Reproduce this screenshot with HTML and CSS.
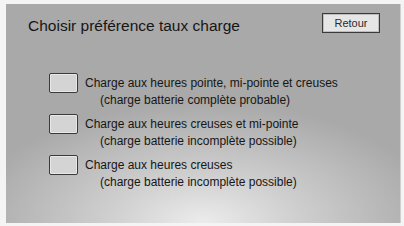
FILE: index.html
```
<!DOCTYPE html>
<html lang="fr">
<head>
    <meta charset="UTF-8">
    <meta name="viewport" content="width=device-width, initial-scale=1.0">
    <title>Choisir préférence taux charge</title>
    <link rel="stylesheet" href="styles.css">
</head>
<body>
    <div class="screen">
        <div class="header">
            <div class="title">Choisir préférence taux charge</div>
            <button class="back-btn">Retour</button>
        </div>
        <div class="options">
            <div class="option">
                <span class="check"></span>
                <div class="label">
                    <div>Charge aux heures pointe, mi-pointe et creuses</div>
                    <div class="note">(charge batterie complète probable)</div>
                </div>
            </div>
            <div class="option">
                <span class="check"></span>
                <div class="label">
                    <div>Charge aux heures creuses et mi-pointe</div>
                    <div class="note">(charge batterie incomplète possible)</div>
                </div>
            </div>
            <div class="option">
                <span class="check"></span>
                <div class="label">
                    <div>Charge aux heures creuses</div>
                    <div class="note">(charge batterie incomplète possible)</div>
                </div>
            </div>
        </div>
    </div>
</body>
</html>
```

FILE: styles.css
```
body {
    margin: 0;
    padding: 4px 3px 3px 6px;
    background-color: #f4f4f4;
    font-family: "Liberation Sans", Arial, sans-serif;
    color: #161616;
}
.screen {
    height: 219px;
    box-sizing: border-box;
    padding: 9px 20px 0 22px;
    background: radial-gradient(ellipse 60% 55% at 50% 100%, #ececec 0%, #cfcfcf 40%, #a9a9a9 100%), #a4a4a4;
    border-right: 1px solid #cfcfcf;
}
.header {
    display: flex;
    justify-content: space-between;
    align-items: flex-start;
}
.title {
    font-size: 15.5px;
    margin-top: 4px;
}
.back-btn {
    width: 58px;
    height: 20px;
    padding: 0;
    border: 1px solid #3a3a3a;
    background-color: #e6e6e6;
    box-shadow: inset 0 0 0 1px #bdbdbd;
    font-family: "Liberation Sans", Arial, sans-serif;
    font-size: 11px;
    color: #2a2a2a;
}
.options {
    margin-top: 38px;
    padding-left: 21px;
}
.option {
    display: flex;
    align-items: flex-start;
    margin-bottom: 5px;
}
.check {
    width: 27px;
    height: 18px;
    border: 1px solid #3a3a3a;
    border-radius: 2px;
    background-color: #d4d4d4;
    box-shadow: inset 0 0 0 1px #e8e8e8;
    margin-right: 7px;
}
.label {
    font-size: 12px;
    line-height: 17px;
    padding-top: 2px;
}
.note {
    padding-left: 15px;
}
```
